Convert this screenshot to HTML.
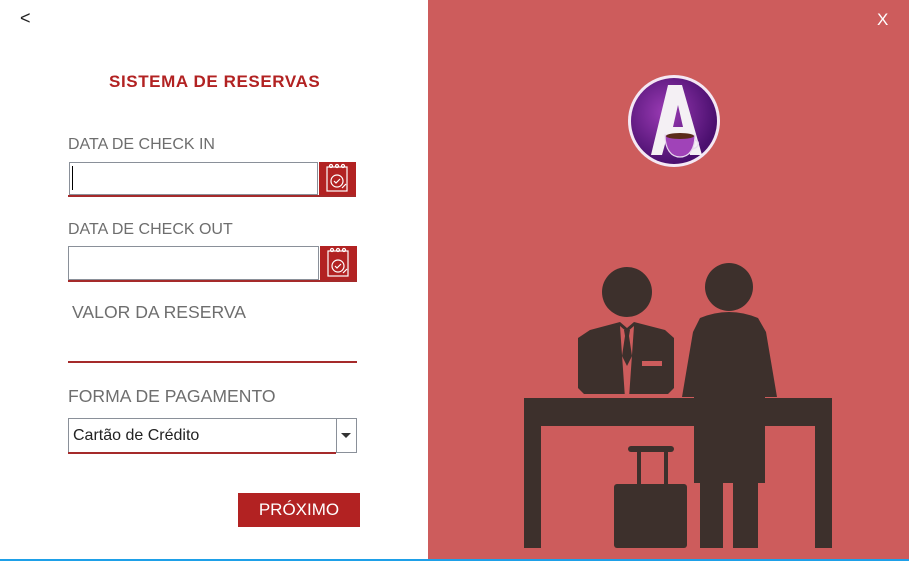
<!DOCTYPE html>
<html><head><meta charset="utf-8"><style>
*{margin:0;padding:0;box-sizing:border-box}
body{width:909px;height:561px;position:relative;overflow:hidden;background:#fff;font-family:"Liberation Sans",sans-serif}
.a{position:absolute}
.lbl{color:#6e6e6e;font-size:16px}
.box{border:1px solid #8a9099;background:#fff}
.ul{background:#a52a2a;height:2px}
.cal{background:#b22222}
</style></head><body>
<div class="a" style="left:20px;top:8px;font-size:18px;color:#222">&lt;</div>
<div class="a" style="left:109px;top:72px;font-size:17px;font-weight:bold;color:#b22222;letter-spacing:0.6px">SISTEMA DE RESERVAS</div>

<div class="a lbl" style="left:68px;top:136px">DATA DE CHECK IN</div>
<div class="a box" style="left:69px;top:162px;width:249px;height:33px"></div>
<div class="a" style="left:72px;top:166px;width:1px;height:24px;background:#000"></div>
<div class="a cal" style="left:319px;top:162px;width:37px;height:34px"><svg width="37" height="34" viewBox="0 0 37 34" fill="none" stroke="#fff" stroke-width="1.2"><rect x="8" y="5" width="20" height="24"/><circle cx="12" cy="4" r="1.5"/><circle cx="18" cy="4" r="1.5"/><circle cx="24" cy="4" r="1.5"/><circle cx="18" cy="19" r="6"/><path d="M15 19l2 2 4-4"/><path d="M23 26l4-4"/></svg></div>
<div class="a ul" style="left:68px;top:195px;width:288px"></div>

<div class="a lbl" style="left:68px;top:221px">DATA DE CHECK OUT</div>
<div class="a box" style="left:68px;top:246px;width:251px;height:34px"></div>
<div class="a cal" style="left:320px;top:246px;width:37px;height:35px"><svg width="37" height="35" viewBox="0 0 37 35" fill="none" stroke="#fff" stroke-width="1.2"><rect x="8" y="5" width="20" height="25"/><circle cx="12" cy="4" r="1.5"/><circle cx="18" cy="4" r="1.5"/><circle cx="24" cy="4" r="1.5"/><circle cx="18" cy="20" r="6"/><path d="M15 20l2 2 4-4"/><path d="M23 27l4-4"/></svg></div>
<div class="a ul" style="left:68px;top:280px;width:289px"></div>

<div class="a lbl" style="left:72px;top:302px;font-size:17.6px">VALOR DA RESERVA</div>
<div class="a ul" style="left:68px;top:361px;width:289px"></div>

<div class="a lbl" style="left:68px;top:386px;font-size:17.6px">FORMA DE PAGAMENTO</div>
<div class="a box" style="left:68px;top:418px;width:289px;height:35px"></div>
<div class="a" style="left:336px;top:418px;width:1px;height:35px;background:#8a9099"></div>
<div class="a" style="left:341px;top:433px;width:0;height:0;border-left:5px solid transparent;border-right:5px solid transparent;border-top:5px solid #333"></div>
<div class="a" style="left:73px;top:427px;font-size:16px;color:#222">Cartão de Crédito</div>
<div class="a ul" style="left:68px;top:452px;width:268px"></div>

<div class="a" style="left:238px;top:493px;width:122px;height:34px;background:#b22222;color:#fff;font-size:17px;text-align:center;line-height:34px">PRÓXIMO</div>

<div class="a" style="left:428px;top:0;width:481px;height:561px;background:#cd5c5c"></div>
<div class="a" style="left:877px;top:10px;font-size:17px;color:#fff">X</div>

<svg class="a" style="left:0;top:0" width="909" height="561">
<defs><radialGradient id="g" cx="0.4" cy="0.4" r="0.6"><stop offset="0" stop-color="#9b3bb5"/><stop offset="1" stop-color="#4a0f6e"/></radialGradient></defs>
<circle cx="674" cy="121" r="46" fill="#f4e8f4"/>
<circle cx="674" cy="121" r="43" fill="url(#g)"/>
<path d="M668 85h14l20 70h-12l-5-18h-18l-5 18h-11z M673 127h10l-5-22z" fill="#f4f0f4" fill-rule="evenodd"/>
<path d="M665 135h30c0 14-6 22-15 22s-15-8-15-22z" fill="#a043b8" stroke="#e8d8ee" stroke-width="1.2"/>
<ellipse cx="680" cy="136" rx="14" ry="3" fill="#5a2a1a"/>
<path d="M694 140c6 0 6 8-2 9" stroke="#e8d8ee" stroke-width="1.5" fill="none"/>
<g fill="#3d302c">
<circle cx="627" cy="292" r="25"/>
<circle cx="729" cy="287" r="24"/>
<path d="M590 330l30-8 7 6 7-6 31 8 9 8v50l-6 6h-84l-6-6v-50z"/>
<rect x="524" y="398" width="308" height="28"/>
<rect x="524" y="398" width="17" height="150"/>
<rect x="815" y="398" width="17" height="150"/>
<path d="M700 318q29-12 58 0l8 14 11 65h-12v86h-71v-86h-12l11-65z"/>
<rect x="700" y="470" width="23" height="78"/>
<rect x="733" y="470" width="25" height="78"/>
<rect x="614" y="484" width="73" height="64" rx="3"/>
<rect x="628" y="446" width="46" height="6" rx="3"/>
<rect x="637" y="446" width="4" height="40"/>
<rect x="664" y="446" width="4" height="40"/>
</g>
<g fill="#cd5c5c"><path d="M620 326l7 6 7-6 -5 72h-4z" /><rect x="642" y="361" width="20" height="5"/></g>
<path d="M624 330h6l-1 6 3 20-5 10-5-10 3-20z" fill="#3d302c"/>
</svg>
<div class="a" style="left:0;top:559px;width:909px;height:2px;background:#1ea0e8"></div>
</body></html>
